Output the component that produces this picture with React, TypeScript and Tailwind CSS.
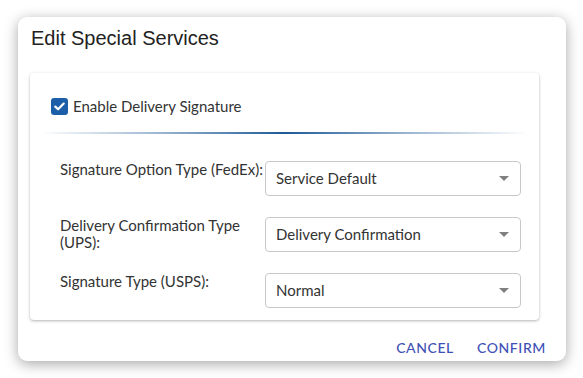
import React from "react";

const rows = [
  { label: "Signature Option Type (FedEx):", value: "Service Default" },
  { label: "Delivery Confirmation Type (UPS):", value: "Delivery Confirmation" },
  { label: "Signature Type (USPS):", value: "Normal" },
];

function Select({ value }: { value: string }) {
  return (
    <div className="flex h-[35px] w-[256px] shrink-0 items-center justify-between rounded-[4px] border border-[#c8c8c8] bg-white pl-[10px] pr-[11px]">
      <span className="text-[15px] text-[#333]">{value}</span>
      <span className="h-0 w-0 border-x-[5px] border-t-[5px] border-x-transparent border-t-[#808080]" />
    </div>
  );
}

export default function App() {
  return (
    <div className="h-[378px] w-[583px] bg-white pl-[18px] pt-[17px] font-['Lato',sans-serif]">
      <div className="h-[344px] w-[548px] rounded-[9px] bg-white shadow-[0_3px_14px_rgba(0,0,0,0.35)]">
        <h2 className="pl-[13px] pt-[7px] font-['Liberation_Sans',Arial,sans-serif] text-[20px] leading-[28px] text-[#222]">
          Edit Special Services
        </h2>

        <div className="ml-[12px] mt-[21px] h-[247px] w-[509px] rounded-[4px] bg-white shadow-[0_1px_3px_rgba(0,0,0,0.3)]">
          <label className="flex items-center gap-[5px] pl-[21px] pt-[25px]">
            <span className="flex h-[17px] w-[17px] items-center justify-center rounded-[3px] bg-[#1d5ea8]">
              <svg width="11" height="9" viewBox="0 0 11 9" fill="none">
                <path d="M1.3 4.6 L4.1 7.3 L9.7 1.6" stroke="white" strokeWidth="2.2" strokeLinecap="round" strokeLinejoin="round" />
              </svg>
            </span>
            <span className="text-[15px] leading-[17px] text-[#333]">Enable Delivery Signature</span>
          </label>

          <div className="mx-[10px] mt-[17px] h-[2px] bg-[linear-gradient(to_right,rgba(29,90,150,0),rgba(29,90,150,0.45)_25%,#1d5a96_50%,rgba(29,90,150,0.45)_75%,rgba(29,90,150,0))]" />

          <div className="flex flex-col gap-[21px] pl-[30px] pt-[27px]">
            {rows.map((r) => (
              <div key={r.label} className="flex items-start">
                <div className="w-[205px] text-[15px] leading-[17px] text-[#333]">{r.label}</div>
                <Select value={r.value} />
              </div>
            ))}
          </div>
        </div>

        <div className="flex justify-end gap-[23px] pr-[20px] pt-[17px]">
          <button className="text-[14px] font-medium tracking-[0.6px] text-[#3f51b5]">CANCEL</button>
          <button className="text-[14px] font-medium tracking-[0.6px] text-[#3f51b5]">CONFIRM</button>
        </div>
      </div>
    </div>
  );
}
